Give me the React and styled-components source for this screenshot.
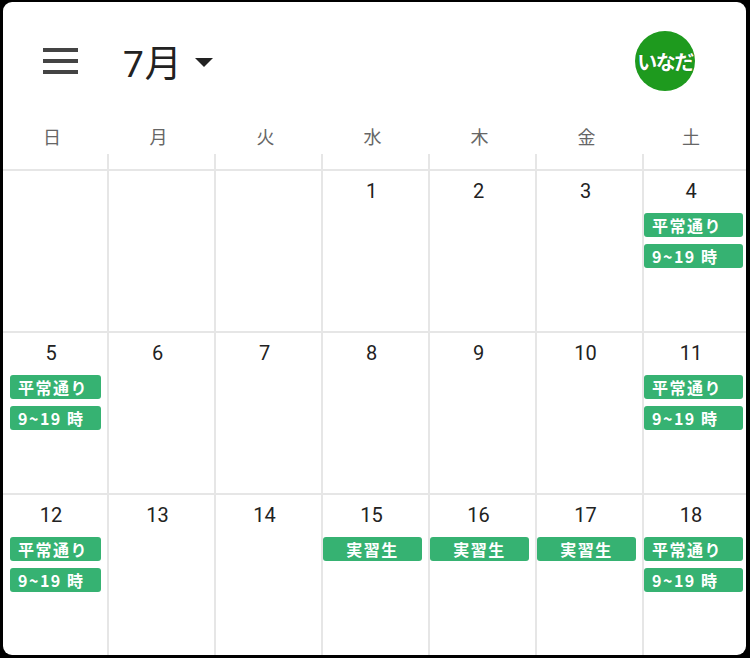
import React from "react";
import styled, { createGlobalStyle } from "styled-components";

const GlobalStyle = createGlobalStyle`
  html, body {
    margin: 0;
    padding: 0;
    background: #000;
  }
  body {
    font-family: "Noto Sans CJK JP", "Noto Sans", Roboto, sans-serif;
  }
`;

const Card = styled.div`
  margin: 2px 4px 0 3px;
  width: 743px;
  height: 653px;
  background: #fff;
  border-radius: 9px;
  overflow: hidden;
  display: flex;
  flex-direction: column;
`;

const Header = styled.div`
  height: 110px;
  box-sizing: border-box;
  display: flex;
  align-items: center;
  padding: 8px 51px 0 40px;
`;

const MenuButton = styled.div`
  width: 35px;
  display: flex;
  flex-direction: column;
  gap: 7.5px;

  span {
    display: block;
    height: 3.5px;
    background: #444;
  }
`;

const MonthTitle = styled.div`
  margin-left: 45px;
  display: flex;
  align-items: center;
  font-family: Roboto, "Noto Sans CJK JP", sans-serif;
  font-size: 37px;
  color: #222;
  letter-spacing: 1px;
`;

const Caret = styled.span`
  margin-left: 12px;
  margin-top: 2px;
  width: 0;
  height: 0;
  border-left: 9px solid transparent;
  border-right: 9px solid transparent;
  border-top: 9px solid #222;
`;

const Spacer = styled.div`
  flex: 1;
`;

const Avatar = styled.div`
  width: 60px;
  height: 60px;
  border-radius: 50%;
  background: #1e9a1e;
  color: #fff;
  display: flex;
  align-items: center;
  justify-content: center;
  font-family: "Noto Sans CJK JP", sans-serif;
  font-weight: 700;
  font-size: 20px;
  letter-spacing: -1.5px;
  text-shadow: 0 0 1px #0a5a0a;
`;

const WeekRow = styled.div`
  display: grid;
  grid-template-columns: 106px repeat(5, 107px) 1fr;
  height: 57px;
`;

const WeekCell = styled.div`
  display: flex;
  flex-direction: column;
`;

const WeekLabel = styled.div`
  height: 42px;
  padding-top: 14px;
  padding-right: 8px;
  box-sizing: border-box;
  line-height: 20px;
  text-align: center;
  font-size: 18px;
  color: #666;
`;

const Tick = styled.div`
  flex: 1;
  border-right: ${(p) => (p.$last ? "none" : "2px solid #e6e6e6")};
  box-sizing: border-box;
`;

const WeekGrid = styled.div`
  display: grid;
  grid-template-columns: 106px repeat(5, 107px) 1fr;
  grid-auto-rows: 162px;
  flex: 1;
`;

const DayCell = styled.div`
  border-top: 2px solid #e6e6e6;
  border-right: ${(p) => (p.$last ? "none" : "2px solid #e6e6e6")};
  padding-left: ${(p) => (p.$first ? "7px" : "0")};
  display: flex;
  flex-direction: column;
  box-sizing: border-box;
`;

const DayNumber = styled.div`
  padding-top: 8px;
  padding-right: ${(p) => (p.$first ? "15px" : "8px")};
  height: 24px;
  line-height: 24px;
  margin-bottom: 10px;
  text-align: center;
  font-family: Roboto, "Noto Sans", sans-serif;
  font-size: 20px;
  color: #222;
`;

const EventChip = styled.div`
  height: 24px;
  width: ${(p) => (p.$first ? "91px" : "99px")};
  margin-bottom: 7px;
  background: #36b272;
  border-radius: 3px;
  color: #fff;
  font-family: "Noto Sans CJK JP", sans-serif;
  font-weight: 700;
  font-size: 16px;
  line-height: 24px;
  letter-spacing: 1.5px;
  box-sizing: border-box;
  padding: 0 ${(p) => (p.$center ? "0" : "8px")};
  text-align: ${(p) => (p.$center ? "center" : "left")};
  white-space: nowrap;
  overflow: hidden;
`;

const weekdays = ["日", "月", "火", "水", "木", "金", "土"];

const regular = [
  { label: "平常通り" },
  { label: "9~19 時" },
];
const intern = [{ label: "実習生", center: true }];

const weeks = [
  [null, null, null, { d: 1 }, { d: 2 }, { d: 3 }, { d: 4, ev: regular }],
  [
    { d: 5, ev: regular },
    { d: 6 },
    { d: 7 },
    { d: 8 },
    { d: 9 },
    { d: 10 },
    { d: 11, ev: regular },
  ],
  [
    { d: 12, ev: regular },
    { d: 13 },
    { d: 14 },
    { d: 15, ev: intern },
    { d: 16, ev: intern },
    { d: 17, ev: intern },
    { d: 18, ev: regular },
  ],
];

export default function App() {
  return (
    <>
      <GlobalStyle />
      <Card>
        <Header>
          <MenuButton>
            <span />
            <span />
            <span />
          </MenuButton>
          <MonthTitle>
            7月
            <Caret />
          </MonthTitle>
          <Spacer />
          <Avatar>いなだ</Avatar>
        </Header>

        <WeekRow>
          {weekdays.map((w, i) => (
            <WeekCell key={w}>
              <WeekLabel>{w}</WeekLabel>
              <Tick $last={i === 6} />
            </WeekCell>
          ))}
        </WeekRow>

        <WeekGrid>
          {weeks.map((week, wi) =>
            week.map((day, di) => (
              <DayCell key={`${wi}-${di}`} $first={di === 0} $last={di === 6}>
                {day && (
                  <>
                    <DayNumber $first={di === 0}>{day.d}</DayNumber>
                    {(day.ev || []).map((e) => (
                      <EventChip
                        key={e.label}
                        $center={e.center}
                        $first={di === 0}
                      >
                        {e.label}
                      </EventChip>
                    ))}
                  </>
                )}
              </DayCell>
            ))
          )}
        </WeekGrid>
      </Card>
    </>
  );
}
